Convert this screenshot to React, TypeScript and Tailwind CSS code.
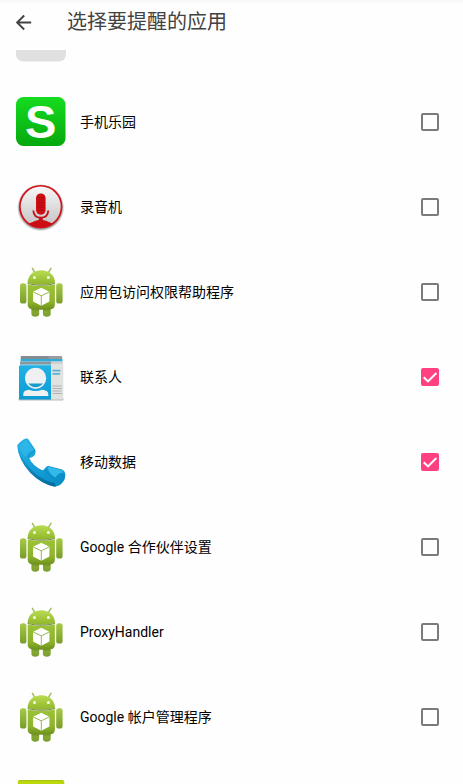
import React, { useState } from "react";
import { MdArrowBack } from "react-icons/md";

type AppItem = {
  id: string;
  name: string;
  icon: () => React.JSX.Element;
  checked: boolean;
};

const BlankIcon = () => (
  <svg viewBox="0 0 50 50" className="size-[50px] shrink-0" aria-hidden="true">
    <rect x="0" y="0" width="50" height="49.5" rx="7" fill="#e0e0e0" />
  </svg>
);

const ParkIcon = () => (
  <svg viewBox="0 0 50 50" className="size-[50px] shrink-0 overflow-visible" aria-hidden="true">
    <defs>
      <linearGradient id="park" x1="0" y1="0" x2="0" y2="1">
        <stop offset="0" stopColor="#16dc20" />
        <stop offset="1" stopColor="#06a80e" />
      </linearGradient>
    </defs>
    <rect x="0" y="0" width="49.5" height="49" rx="7.5" fill="url(#park)" />
    <text
      x="24.6"
      y="41"
      textAnchor="middle"
      fontSize="47"
      fontWeight="700"
      fill="#fff"
      className="font-['Liberation_Sans',sans-serif]"
    >
      S
    </text>
  </svg>
);

const RecorderIcon = () => (
  <svg viewBox="0 0 50 50" className="size-[50px] shrink-0" aria-hidden="true">
    <defs>
      <linearGradient id="recFace" x1="0" y1="0" x2="0" y2="1">
        <stop offset="0" stopColor="#f8f8f8" />
        <stop offset="1" stopColor="#c2c2c2" />
      </linearGradient>
      <radialGradient id="recShadow">
        <stop offset="0.84" stopColor="#000" stopOpacity="0.6" />
        <stop offset="1" stopColor="#000" stopOpacity="0" />
      </radialGradient>
      <clipPath id="recClip">
        <circle cx="24.7" cy="24.6" r="20.8" />
      </clipPath>
    </defs>
    <circle cx="24.7" cy="25.6" r="23.6" fill="url(#recShadow)" />
    <circle cx="24.7" cy="24.6" r="21.7" fill="#d4141b" />
    <circle cx="24.7" cy="24.6" r="20" fill="url(#recFace)" />
    <g clipPath="url(#recClip)">
      <path d="M8 48V42.5Q13 42 16 40.300Q20 38.600 22.500 38H27Q29.500 38.600 33.500 40.300Q36.500 42 42 42.500V48Z" fill="#cc0d14" />
    </g>
    <rect x="20" y="11.500" width="9.600" height="21.200" rx="4.600" fill="#cc1016" />
    <path
      d="M21.500 15.500h6.600M21.500 18h6.600M21.500 20.500h6.600M21.500 23h6.600M21.500 25.500h6.600M21.500 28h6.600"
      stroke="#8e070b"
      strokeWidth="0.700"
      strokeDasharray="1.200 0.600"
    />
    <path
      d="M17.300 28.500C17.600 33 20.500 35.700 24.800 35.700S32 33 32.300 28.500"
      fill="none"
      stroke="#c4141a"
      strokeWidth="1.900"
    />
    <rect x="22.800" y="35.500" width="4" height="5" fill="#c4141a" />
  </svg>
);

const AndroidIcon = () => (
  <svg viewBox="0 0 50 50" className="size-[50px] shrink-0" aria-hidden="true">
    <defs>
      <linearGradient id="droidHead" x1="0" y1="0" x2="0" y2="1">
        <stop offset="0" stopColor="#b9db52" />
        <stop offset="1" stopColor="#8fb62a" />
      </linearGradient>
      <linearGradient id="droidBody" x1="0" y1="0" x2="0" y2="1">
        <stop offset="0" stopColor="#9cc436" />
        <stop offset="0.7" stopColor="#8cb22b" />
        <stop offset="1" stopColor="#6d8f1c" />
      </linearGradient>
      <linearGradient id="droidArm" x1="0" y1="0" x2="0" y2="1">
        <stop offset="0" stopColor="#a6ca48" />
        <stop offset="1" stopColor="#7a9c2a" />
      </linearGradient>
      <linearGradient id="droidLeg" x1="0" y1="0" x2="0" y2="1">
        <stop offset="0" stopColor="#67861c" />
        <stop offset="0.5" stopColor="#85a835" />
        <stop offset="1" stopColor="#7b9c2e" />
      </linearGradient>
    </defs>
    <path
      d="M16.400 1.400L18.900 5.600M35 1.400L32.300 5.600"
      stroke="#a3bd60"
      strokeWidth="1.500"
      strokeLinecap="round"
    />
    <path d="M15.400 40H23.200V47Q22.900 49.800 19.300 49.800T15.400 47Z" fill="url(#droidLeg)" />
    <path d="M26.900 40H34.700V47Q34.400 49.800 30.800 49.800T26.900 47Z" fill="url(#droidLeg)" />
    <rect x="4" y="16.200" width="6.400" height="20.300" rx="2.600" fill="url(#droidArm)" />
    <rect x="40.200" y="16.200" width="6.400" height="20.300" rx="2.600" fill="url(#droidArm)" />
    <path
      d="M11.700 17.600Q25.300 20.500 38.900 17.600V37.500Q38.900 42 34 42.300Q25.300 43.200 16.600 42.300Q11.700 42 11.700 37.500Z"
      fill="url(#droidBody)"
    />
    <path
      d="M11.600 16C11.700 8.200 17.500 3.300 25.300 3.300S38.900 8.200 39 16Q25.300 19.300 11.600 16Z"
      fill="url(#droidHead)"
    />
    <path d="M11.700 16.500Q25.300 20 38.900 16.500" fill="none" stroke="#5f752a" strokeWidth="0.900" />
    <circle cx="18.500" cy="10.500" r="1.500" fill="#f4f8e6" />
    <circle cx="32.400" cy="10.500" r="1.500" fill="#f4f8e6" />
    <path d="M25.300 20.700L33.400 24.700V34.400L25.300 38.700L17.100 34.400V24.700Z" fill="#fff" />
    <path
      d="M17.300 25L25.300 28.800L33.200 25M25.300 28.800V38.500"
      fill="none"
      stroke="#8cab45"
      strokeWidth="0.900"
    />
  </svg>
);

const ContactsIcon = () => (
  <svg viewBox="0 0 50 50" className="size-[50px] shrink-0" aria-hidden="true">
    <defs>
      <linearGradient id="card" x1="0" y1="0" x2="0" y2="1">
        <stop offset="0" stopColor="#1fb2e6" />
        <stop offset="1" stopColor="#0d9ad4" />
      </linearGradient>
    </defs>
    <rect x="2.500" y="46" width="45" height="2.400" rx="1" fill="#777" opacity="0.500" />
    <rect x="4.800" y="4" width="41.400" height="4" rx="1" fill="#9a9c9d" />
    <rect x="4.800" y="4" width="28" height="3" rx="1" fill="#828c91" />
    <rect x="4.600" y="7" width="41.800" height="2.600" fill="#2fabdc" />
    <rect x="4" y="9.600" width="31" height="2.600" fill="#8a979d" />
    <rect x="35" y="9.600" width="11.800" height="4" fill="#cfd1d2" />
    <rect x="4" y="12.200" width="31" height="1.600" fill="#6fb7d2" />
    <rect x="3" y="13.500" width="32.500" height="34" rx="1" fill="url(#card)" />
    <rect x="35" y="12" width="12.300" height="35.500" rx="0.800" fill="#e0e1e1" />
    <path d="M36.500 18.600h8M36.500 21.800h7.500" stroke="#58b2d5" strokeWidth="1.800" />
    <path
      d="M36.500 34h9M36.500 36.500h9.500M36.500 39h9M36.500 41.500h9.500"
      stroke="#b0b2b3"
      strokeWidth="1.200"
    />
    <path
      d="M7.300 44V42Q7.500 38.200 13 37.700Q19.500 40.300 26 37.700Q32 38.200 32.300 42V44Z"
      fill="#eef0f1"
    />
    <circle cx="19.600" cy="26.300" r="10.600" fill="#eef0f1" />
    <path d="M12.300 31.500H27Q24 35.200 19.600 35.200T12.300 31.500Z" fill="#169ccf" />
  </svg>
);

const PhoneIcon = () => (
  <svg viewBox="0 0 50 50" className="size-[50px] shrink-0" aria-hidden="true">
    <defs>
      <linearGradient id="phone" x1="0" y1="0" x2="1" y2="1">
        <stop offset="0" stopColor="#25b2e6" />
        <stop offset="0.5" stopColor="#149fd8" />
        <stop offset="1" stopColor="#078ac2" />
      </linearGradient>
      <linearGradient id="phoneShade" x1="0" y1="0" x2="0" y2="1">
        <stop offset="0" stopColor="#0f7fb2" stopOpacity="0" />
        <stop offset="1" stopColor="#046b9c" />
      </linearGradient>
    </defs>
    <path
      d="M1.200 8.500Q5 3.300 9.800 1.500Q11.500 1.100 12.500 2.600L19.300 12.800Q20 14.500 18.900 17.500Q17.500 20.300 13.200 20.900Q16.500 28.500 26.300 33.300Q28 33.300 29 31.300Q30.500 28.700 32.800 29L46 32.600Q49 33.800 49.300 37Q49.600 42 46.500 45.600Q43.500 49.500 38 49.500Q25 46.500 14.500 36Q2 22.500 1.200 8.500Z"
      fill="url(#phone)"
    />
    <path
      d="M1.200 8.500Q2 22.500 14.500 36Q25 46.500 38 49.500Q39 49.500 40 49.300L38.500 46Q26 43.500 16 33.500Q5 22 1.200 8.500Z"
      fill="url(#phoneShade)"
    />
    <path
      d="M3 9Q6 5 10.500 2.500L18.300 13.500Q12 13.500 9.500 20Q5 16 3 9Z"
      fill="#3cc0ee"
      opacity="0.500"
    />
    <path d="M31.500 31Q32 29.500 34 30L45.500 33.200Q47.500 34.200 47.500 35.800Q42 35.500 39.500 40.500Q34 38 31.500 31Z" fill="#45c8f2" opacity="0.700" />
    <path
      d="M19 13.500Q13.500 15 12.500 21M29 32Q31 37.500 38.500 41"
      fill="none"
      stroke="#0a80b5"
      strokeWidth="1"
      opacity="0.600"
    />
  </svg>
);

const LimeIcon = () => (
  <svg viewBox="0 0 50 50" className="size-[50px] shrink-0" aria-hidden="true">
    <rect x="1.800" y="3" width="46.500" height="44" rx="2" fill="#bbd80a" />
    <path d="M3 3.600h44" stroke="#a9c013" strokeWidth="1" />
  </svg>
);

const initialApps: AppItem[] = [
  { id: "blank", name: "", icon: BlankIcon, checked: false },
  { id: "park", name: "手机乐园", icon: ParkIcon, checked: false },
  { id: "recorder", name: "录音机", icon: RecorderIcon, checked: false },
  { id: "access", name: "应用包访问权限帮助程序", icon: AndroidIcon, checked: false },
  { id: "contacts", name: "联系人", icon: ContactsIcon, checked: true },
  { id: "mobile", name: "移动数据", icon: PhoneIcon, checked: true },
  { id: "partner", name: "Google 合作伙伴设置", icon: AndroidIcon, checked: false },
  { id: "proxy", name: "ProxyHandler", icon: AndroidIcon, checked: false },
  { id: "account", name: "Google 帐户管理程序", icon: AndroidIcon, checked: false },
  { id: "lime", name: "", icon: LimeIcon, checked: false },
];

const App = () => {
  const [apps, setApps] = useState(initialApps);

  const toggle = (id: string) => {
    setApps(apps.map((a) => (a.id === id ? { ...a, checked: !a.checked } : a)));
  };

  return (
    <div className="h-screen flex flex-col overflow-hidden bg-[#fefefe] font-[Roboto,'Noto_Sans_CJK_SC',sans-serif]">
      <header className="flex h-[50px] shrink-0 items-center gap-8 bg-linear-to-b from-[#f7f7f7] to-[#fefefe] to-10% pb-1.5 pl-3 text-[#424242]">
        <button type="button" aria-label="返回">
          <MdArrowBack size={23} />
        </button>
        <h1 className="text-[20px] leading-6">选择要提醒的应用</h1>
      </header>

      <main className="min-h-0 flex-1 overflow-hidden">
        {/* 列表已向上滚动一部分 */}
        <ul className="-mt-14">
          {apps.map(({ id, name, icon: Icon, checked }) => (
            <li key={id}>
              <label className="flex h-[85px] items-center gap-3.5 pl-4 pr-6">
                <Icon />
                <span className="flex-1 text-[14px] leading-5 text-black">{name}</span>
                <span className="grid shrink-0 place-items-center">
                  <input
                    type="checkbox"
                    checked={checked}
                    onChange={() => toggle(id)}
                    className="peer col-start-1 row-start-1 size-[18px] appearance-none rounded-xs border-2 border-[#7b7b7b] checked:border-[#ff4081] checked:bg-[#ff4081]"
                  />
                  <svg
                    viewBox="0 0 18 18"
                    className="pointer-events-none invisible col-start-1 row-start-1 size-[18px] peer-checked:visible"
                    aria-hidden="true"
                  >
                    <path d="M2.700 9.200L7 13.400L15.400 5" fill="none" stroke="#fff" strokeWidth="2" />
                  </svg>
                </span>
              </label>
            </li>
          ))}
        </ul>
      </main>
    </div>
  );
};

export default App;
